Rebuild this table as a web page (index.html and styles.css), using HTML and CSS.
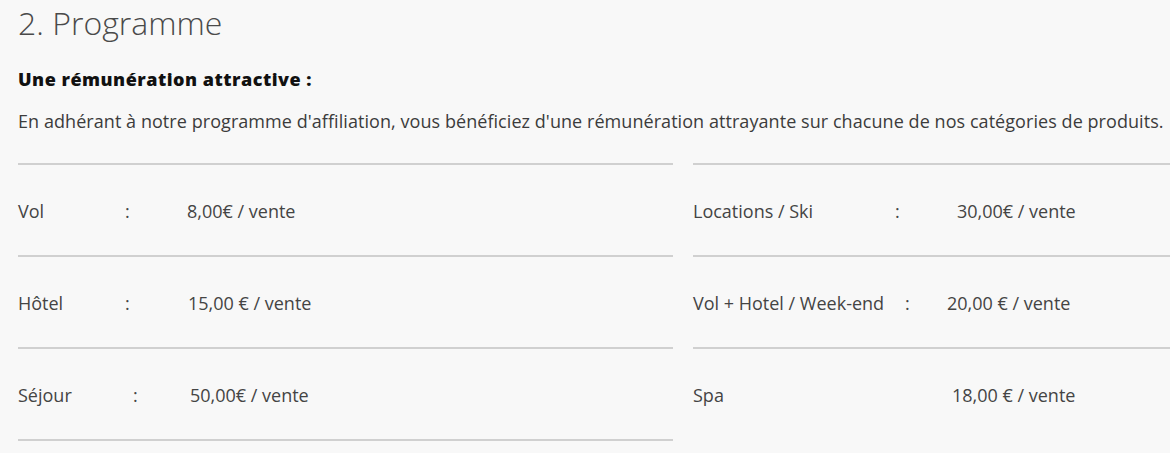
FILE: index.html
```html
<!DOCTYPE html>
<html lang="fr">
<head>
<meta charset="utf-8">
<title>Programme</title>
<link rel="stylesheet" href="styles.css">
</head>
<body>
<main class="page">
  <h2 class="title">2. Programme</h2>
  <h3 class="subtitle">Une rémunération attractive :</h3>
  <p class="intro">En adhérant à notre programme d'affiliation, vous bénéficiez d'une rémunération attrayante sur chacune de nos catégories de produits.</p>
  <div class="tables">
    <div class="table table-left">
      <div class="row r-vol"><span class="label">Vol</span><span class="colon">:</span><span class="value">8,00€ / vente</span></div>
      <div class="row r-hotel"><span class="label">Hôtel</span><span class="colon">:</span><span class="value">15,00 € / vente</span></div>
      <div class="row r-sejour"><span class="label">Séjour</span><span class="colon">:</span><span class="value">50,00€ / vente</span></div>
    </div>
    <div class="table table-right">
      <div class="row r-loc"><span class="label">Locations / Ski</span><span class="colon">:</span><span class="value">30,00€ / vente</span></div>
      <div class="row r-we"><span class="label">Vol + Hotel / Week-end</span><span class="colon">:</span><span class="value">20,00 € / vente</span></div>
      <div class="row r-spa"><span class="label">Spa</span><span class="colon"></span><span class="value">18,00 € / vente</span></div>
    </div>
  </div>
</main>
</body>
</html>
```

FILE: styles.css
```css
html, body {
  margin: 0;
  padding: 0;
  background: #f8f8f8;
  overflow: hidden;
}

.page {
  width: 1360px;
  padding: 0 0 0 18px;
  font-family: "Open Sans", "DejaVu Sans", sans-serif;
  color: #444;
}

.title {
  margin: 0;
  padding-top: 3px;
  font-size: 32px;
  line-height: 40px;
  font-weight: 300;
  color: #4a4a4a;
}

.subtitle {
  margin: 24px 0 0;
  font-size: 18px;
  line-height: 24px;
  font-weight: 800;
  letter-spacing: 0.5px;
  color: #111;
}

.intro {
  margin: 18px 0 0;
  font-size: 18px;
  line-height: 24px;
  letter-spacing: 0.06px;
  color: #3c3c3c;
  white-space: nowrap;
}

.tables {
  display: flex;
  gap: 20px;
  margin-top: 30px;
}

.table {
  width: 655px;
  flex: none;
}

.table-left {
  border-bottom: 2px solid #d0d0d0;
}

.row {
  display: grid;
  grid-template-columns: var(--a) var(--b) auto;
  align-items: start;
  height: 24px;
  padding: 34px 0 32px;
  border-top: 2px solid #d0d0d0;
  font-size: 18px;
  line-height: 24px;
  color: #444;
}

.r-vol    { --a: 107px; --b: 62px; }
.r-hotel  { --a: 107px; --b: 63px; }
.r-sejour { --a: 115px; --b: 57px; }
.r-loc    { --a: 202px; --b: 62px; }
.r-we     { --a: 212px; --b: 42px; }
.r-spa    { --a: 259px; --b: 0px; }
```
